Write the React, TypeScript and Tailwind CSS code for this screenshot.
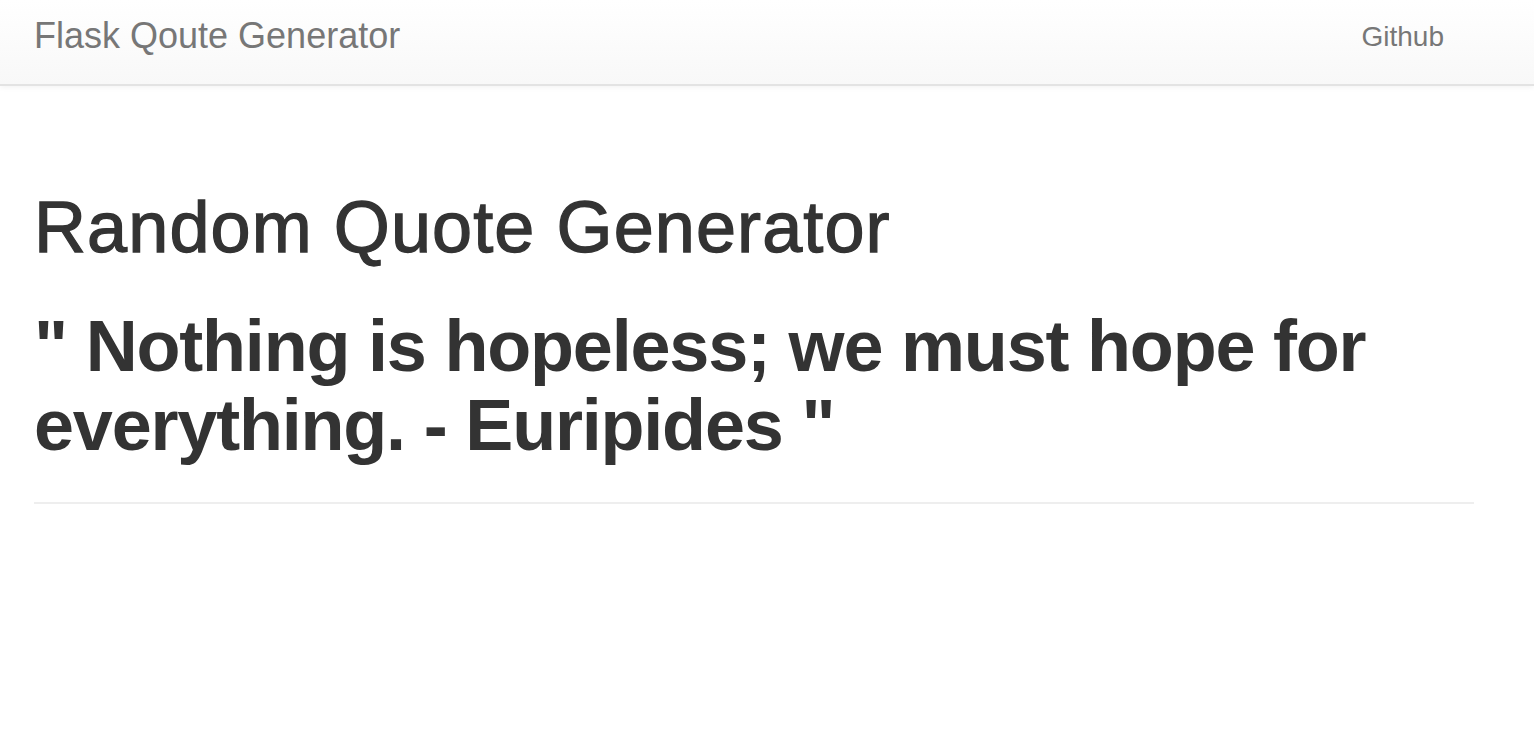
import React from "react";

export default function App() {
  return (
    <div className="min-h-screen bg-white" style={{ fontFamily: '"Liberation Sans", Arial, sans-serif' }}>
      <nav className="h-[86px] border-b-2 border-[#e3e3e3] bg-gradient-to-b from-white to-[#f8f8f8] shadow-[0_1px_6px_rgba(0,0,0,0.06)] flex items-center justify-between pl-[34px] pr-[90px]">
        <a className="text-[36px] leading-none text-[#777777] -mt-[12px]">Flask Qoute Generator</a>
        <a className="text-[28px] leading-none text-[#777777] -mt-[11px]">Github</a>
      </nav>
      <main className="pl-[34px] pt-[102px]">
        <div className="w-[1440px]">
          <h1 className="text-[72px] leading-[1.1] text-[#333333] tracking-[1.1px] [-webkit-text-stroke:1.3px_#333333]">Random Quote Generator</h1>
          <h1 className="mt-[40px] text-[72px] leading-[1.1] font-bold text-[#333333] tracking-[-1.2px]">
            " Nothing is hopeless; we must hope for everything. - Euripides "
          </h1>
          <hr className="mt-[36px] border-0 border-t-2 border-[#eeeeee]" />
        </div>
      </main>
    </div>
  );
}
